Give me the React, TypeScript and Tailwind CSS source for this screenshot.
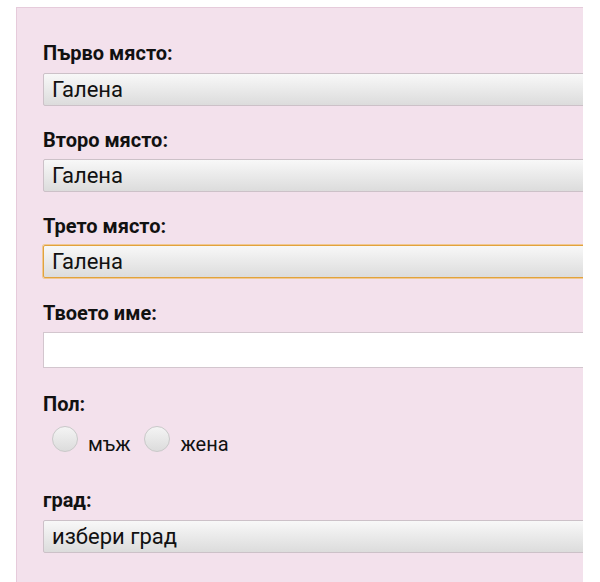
import React from "react";

function SelectBox({ value, focused }: { value: string; focused?: boolean }) {
  return (
    <div
      className={
        "h-[33px] w-[560px] rounded-[2px] border flex items-center pl-[8px] text-[22px] leading-none text-[#111] bg-gradient-to-b from-[#f8f8f8] to-[#dcdcdc] " +
        (focused
          ? "border-[#e2a23c] shadow-[0_0_0_1px_rgba(238,190,110,0.7)]"
          : "border-[#ccc1c8]")
      }
    >
      {value}
    </div>
  );
}

function Label({ children, className = "" }: { children: React.ReactNode; className?: string }) {
  return (
    <div className={"text-[20px] leading-[24px] font-bold text-[#111] " + className}>
      {children}
    </div>
  );
}

function Radio({ label }: { label: string }) {
  return (
    <div className="flex items-end h-[26px]">
      <div className="w-[26px] h-[26px] rounded-full border border-[#c9c9c9] bg-gradient-to-b from-[#f4f4f4] to-[#dcdcdc]" />
      <span className="ml-[10px] text-[20px] leading-none text-[#111] translate-y-[2px]">{label}</span>
    </div>
  );
}

export default function App() {
  return (
    <div
      className="w-[600px] h-[582px] bg-white overflow-hidden pt-[7px] pl-[16px]"
      style={{ fontFamily: "Roboto, 'Noto Sans', 'Liberation Sans', sans-serif" }}
    >
      <div className="w-[567px] h-[600px] bg-[#f3e1ec] border-t border-l border-[#e6cbdb] overflow-hidden pl-[26px] pt-[33px]">
        <Label>Първо място:</Label>
        <div className="mt-[8px]">
          <SelectBox value="Галена" />
        </div>

        <Label className="mt-[22px]">Второ място:</Label>
        <div className="mt-[7px]">
          <SelectBox value="Галена" />
        </div>

        <Label className="mt-[22px]">Трето място:</Label>
        <div className="mt-[7px]">
          <SelectBox value="Галена" focused />
        </div>

        <Label className="mt-[23px]">Твоето име:</Label>
        <div className="mt-[7px] h-[36px] w-[560px] bg-white border border-[#d3c6ce]" />

        <Label className="mt-[24px]">Пол:</Label>
        <div className="mt-[10px] ml-[9px] flex items-end gap-[14px]">
          <Radio label="мъж" />
          <Radio label="жена" />
        </div>

        <Label className="mt-[36px]">град:</Label>
        <div className="mt-[8px]">
          <SelectBox value="избери град" />
        </div>
      </div>
    </div>
  );
}
